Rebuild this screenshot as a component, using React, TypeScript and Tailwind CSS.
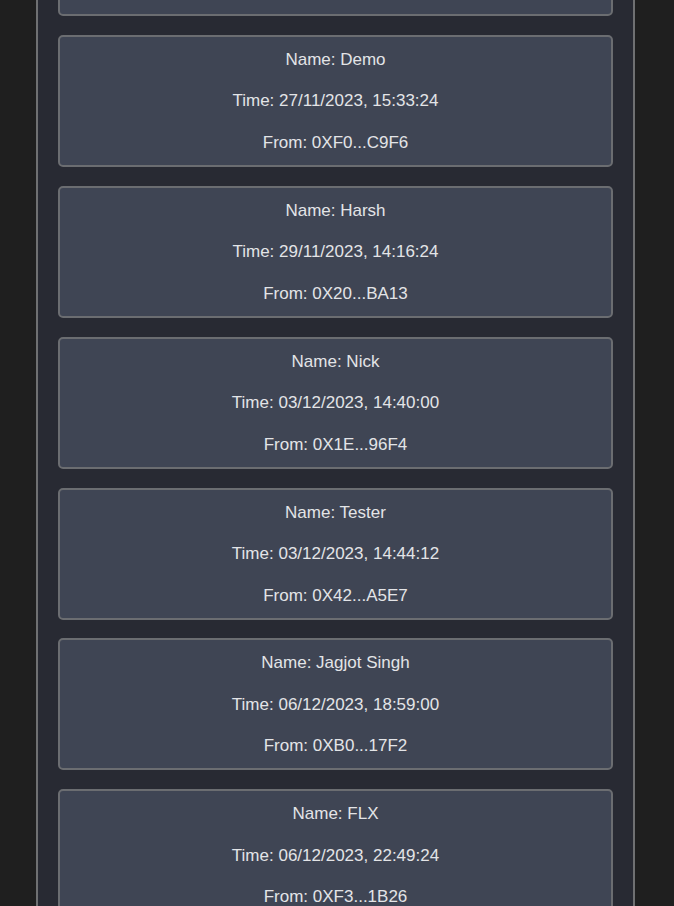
const messages = [
  { name: "Alice", time: "25/11/2023, 11:02:48", from: "0XA1...D3C4" },
  { name: "Demo", time: "27/11/2023, 15:33:24", from: "0XF0...C9F6" },
  { name: "Harsh", time: "29/11/2023, 14:16:24", from: "0X20...BA13" },
  { name: "Nick", time: "03/12/2023, 14:40:00", from: "0X1E...96F4" },
  { name: "Tester", time: "03/12/2023, 14:44:12", from: "0X42...A5E7" },
  { name: "Jagjot Singh", time: "06/12/2023, 18:59:00", from: "0XB0...17F2" },
  { name: "FLX", time: "06/12/2023, 22:49:24", from: "0XF3...1B26" },
  { name: "Sam", time: "07/12/2023, 09:12:36", from: "0X7C...4E01" },
];

export default function App() {
  return (
    <div className="h-screen overflow-hidden bg-[#1f1f1f] font-['Liberation_Sans',Arial,sans-serif] text-[17px] text-[#e3e4e7]">
      <div className="ml-[36px] w-[599px] border-x-2 border-[#6f7072] bg-[#282a33] px-[20px]">
        <div className="-mt-[116px] flex flex-col gap-[18.9px] pb-6">
          {messages.map((m, i) => (
            <div
              key={i}
              className="flex flex-col gap-[17.5px] rounded-[5px] border-2 border-[#6b6d71] bg-[#3f4554] pt-[11px] pb-[10px] text-center leading-6"
            >
              <p>Name: {m.name}</p>
              <p>Time: {m.time}</p>
              <p>From: {m.from}</p>
            </div>
          ))}
        </div>
      </div>
    </div>
  );
}
